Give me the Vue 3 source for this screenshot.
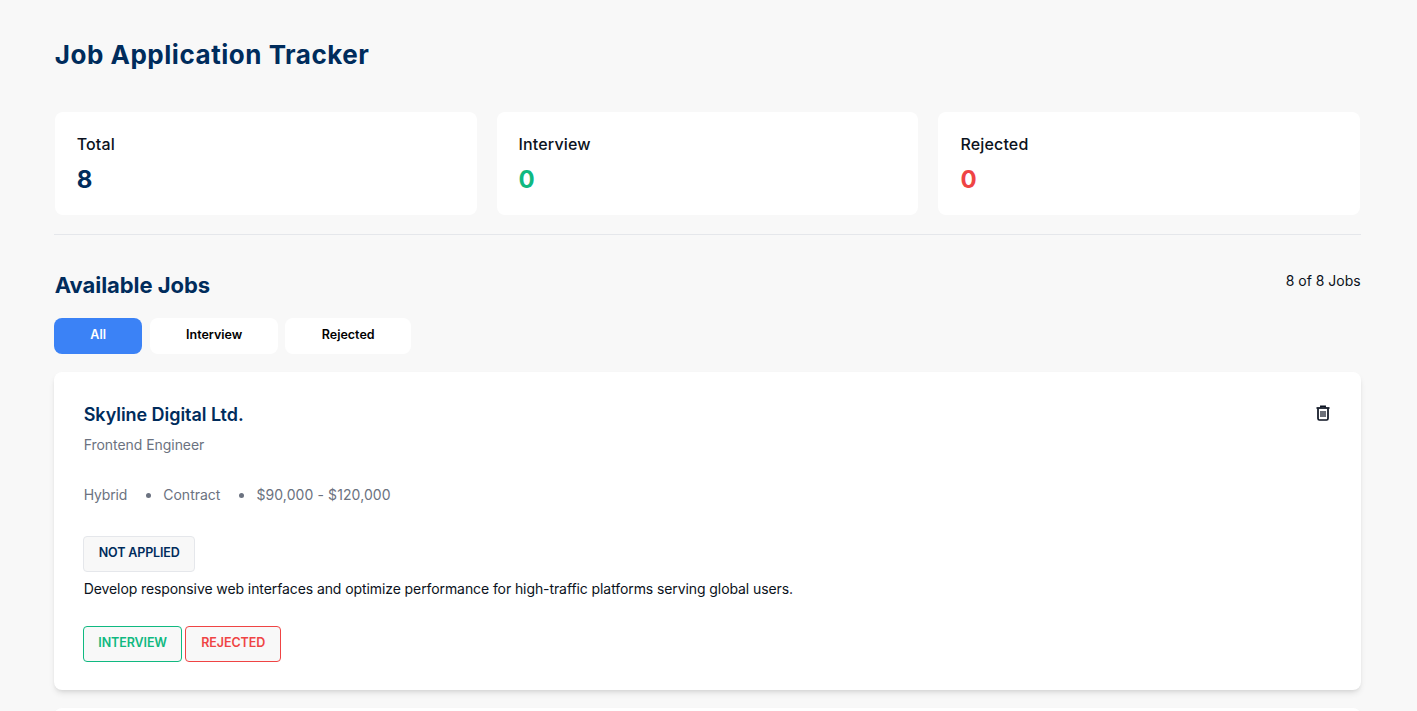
<script setup>
const stats = [
  { label: 'Total', value: 8, tone: 'navy' },
  { label: 'Interview', value: 0, tone: 'green' },
  { label: 'Rejected', value: 0, tone: 'red' },
]
const filters = ['All', 'Interview', 'Rejected']
</script>

<template>
  <main class="page">
    <h1 class="title">Job Application Tracker</h1>

    <section class="stats">
      <div v-for="s in stats" :key="s.label" class="stat">
        <div class="stat-label">{{ s.label }}</div>
        <div class="stat-value" :class="s.tone">{{ s.value }}</div>
      </div>
    </section>

    <hr class="rule" />

    <div class="jobs-head">
      <h2 class="jobs-title">Available Jobs</h2>
      <span class="jobs-count">8 of 8 Jobs</span>
    </div>

    <div class="filters">
      <button v-for="(f, i) in filters" :key="f" class="filter" :class="['f' + i, { active: i === 0 }]">{{ f }}</button>
    </div>

    <article class="card">
      <div class="card-top">
        <h3 class="company">Skyline Digital Ltd.</h3>
        <svg class="trash" width="14" height="16" viewBox="0 0 14 16" fill="none" stroke="#0b1220" aria-label="Delete">
          <path d="M0.5 3h13" stroke-width="1.7" />
          <path d="M4.8 2.6V1.2h4.4v1.4" stroke-width="1.5" />
          <path d="M2 3.4v10.2a1.4 1.4 0 0 0 1.4 1.4h7.2a1.4 1.4 0 0 0 1.4-1.4V3.4" stroke-width="1.7" />
          <path d="M5 6v6M7 6v6M9 6v6" stroke-width="1.2" />
        </svg>
      </div>
      <p class="role">Frontend Engineer</p>
      <ul class="meta">
        <li class="hybrid">Hybrid</li>
        <li class="dot">Contract</li>
        <li class="dot salary">$90,000 - $120,000</li>
      </ul>
      <span class="badge">NOT APPLIED</span>
      <p class="desc">Develop responsive web interfaces and optimize performance for high-traffic platforms serving global users.</p>
      <div class="actions">
        <button class="act interview">INTERVIEW</button>
        <button class="act rejected">REJECTED</button>
      </div>
    </article>

    <div class="card next"></div>
  </main>
</template>

<style>
html, body { margin: 0; background: #f8f8f8; overflow: hidden; }
</style>

<style scoped>
.page {
  box-sizing: border-box;
  height: 711px;
  overflow: hidden;
  padding: 39px 56.3px 0 54.2px;
  font-family: Inter, "Liberation Sans", sans-serif;
  color: #0b1220;
}
.title {
  margin: 0 0 41px;
  padding-left: 0.5px;
  font-size: 26px;
  line-height: 32px;
  font-weight: 700;
  color: #002c5c;
  letter-spacing: 0.53px;
}
.stats { display: grid; grid-template-columns: repeat(3, 1fr); gap: 20px; margin: 0 0.4px 0 0.5px; }
.stat {
  height: 103px;
  box-sizing: border-box;
  padding: 22px;
  background: #fff;
  border-radius: 8px;
}
.stat-label { font-size: 16px; line-height: 20px; font-weight: 500; letter-spacing: 0.15px; }
.stat-value { margin-top: 10px; font-size: 24px; line-height: 32px; font-weight: 700; }
.navy { color: #002c5c; }
.green { color: #10b981; }
.red { color: #ef4444; }
.rule { margin: 19px 0 0; border: 0; border-top: 1px solid #e5e7eb; }
.jobs-head {
  display: flex;
  justify-content: space-between;
  align-items: flex-start;
  margin-top: 36px;
}
.jobs-title { margin: -1px 0 0; padding-left: 0.5px; font-size: 22px; line-height: 30px; font-weight: 700; color: #002c5c; letter-spacing: -0.05px; }
.jobs-count { font-size: 14px; line-height: 20px; }
.filters { display: flex; gap: 7px; margin-top: 18px; }
.filter {
  height: 36px;
  padding: 0 0 3px;
  border: 0;
  border-radius: 8px;
  background: #fff;
  color: #000;
  font: 600 12.5px Inter, "Liberation Sans", sans-serif;
}
.f0 { width: 88px; margin-right: 1px; }
.f1 { width: 128px; }
.f2 { width: 126px; }
.filter.active { background: #3b82f6; color: #fff; }
.card {
  margin-top: 18px;
  padding: 29px 31px 28px 29px;
  background: #fff;
  border-radius: 8px;
  box-shadow: 0 4px 6px -1px rgba(0, 0, 0, 0.1), 0 2px 4px -2px rgba(0, 0, 0, 0.1);
}
.card-top { display: flex; justify-content: space-between; align-items: flex-start; }
.company { margin: 0; padding-left: 0.5px; font-size: 18px; line-height: 28px; font-weight: 600; color: #002c5c; letter-spacing: -0.05px; }
.trash { margin-top: 4px; }
.role { margin: 6px 0 0; padding-left: 0.5px; font-size: 14px; line-height: 20px; color: #6b7280; letter-spacing: -0.05px; }
.meta {
  display: flex;
  gap: 36px;
  margin: 30px 0 0;
  padding: 0 0 0 0.5px;
  list-style: none;
  font-size: 14px;
  line-height: 20px;
  color: #6b7280;
}
.hybrid { letter-spacing: -0.15px; }
.salary { letter-spacing: 0.1px; }
.dot { position: relative; }
.dot::before {
  content: "";
  position: absolute;
  left: -17px;
  top: 8px;
  width: 5px;
  height: 5px;
  border-radius: 50%;
  background: #6b7280;
}
.badge {
  display: block;
  box-sizing: border-box;
  width: 112px;
  height: 36px;
  margin-top: 31px;
  border: 1px solid #e5e7eb;
  border-radius: 4px;
  background: #f8f8f8;
  text-align: center;
  font-size: 12.5px;
  line-height: 32px;
  font-weight: 600;
  color: #002c5c;
  letter-spacing: -0.15px;
}
.desc { margin: 7px 0 0; padding-left: 0.5px; font-size: 14px; line-height: 20px; color: #0b1220; letter-spacing: -0.09px; }
.actions { display: flex; gap: 3px; margin-top: 27px; }
.act {
  height: 36px;
  padding: 0 0 3px;
  border-radius: 4px;
  background: #f8f8f8;
  font: 600 12.5px Inter, "Liberation Sans", sans-serif;
  letter-spacing: -0.1px;
}
.interview { width: 99px; border: 1px solid #10b981; color: #10b981; }
.rejected { width: 96px; border: 1px solid #ef4444; color: #ef4444; }
.next { height: 60px; }
</style>
